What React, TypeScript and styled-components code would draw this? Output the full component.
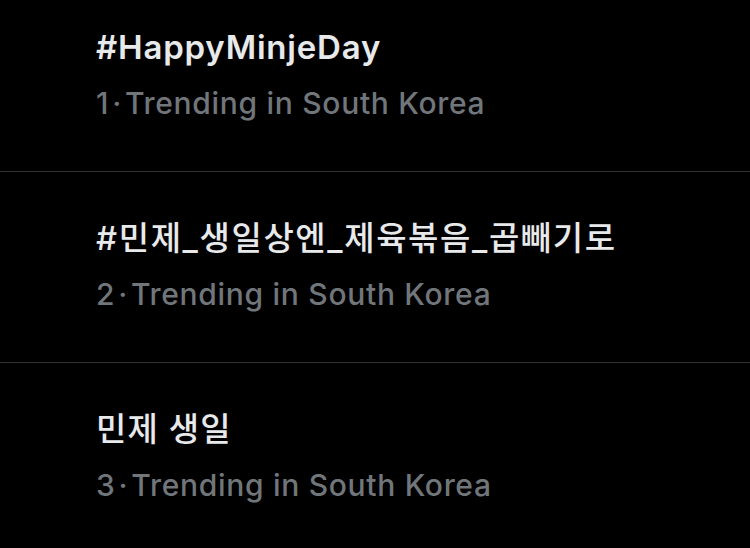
import React from "react";
import styled, { createGlobalStyle } from "styled-components";

const GlobalStyle = createGlobalStyle`
  html, body {
    margin: 0;
    padding: 0;
    background: #000000;
  }
  body {
    font-family: "Inter", "Noto Sans CJK KR", sans-serif;
    -webkit-font-smoothing: antialiased;
  }
`;

const Page = styled.div`
  width: 750px;
  height: 548px;
  background: #000000;
  overflow: hidden;
  display: flex;
  flex-direction: column;
`;

const Row = styled.div<{ $first?: boolean; $last?: boolean }>`
  display: flex;
  flex-direction: column;
  gap: 18px;
  padding: ${(p) => (p.$first ? "27px" : "46px")} 0 50px 96px;
  border-bottom: ${(p) => (p.$last ? "none" : "1px solid #2f3336")};
  flex-shrink: 0;
`;

const Title = styled.div<{ $hangul?: boolean; $track: number }>`
  font-family: "Inter", "Noto Sans CJK KR", sans-serif;
  font-size: 33px;
  line-height: 40px;
  font-weight: ${(p) => (p.$hangul ? 500 : 600)};
  color: #e7e9ea;
  white-space: nowrap;
  letter-spacing: ${(p) => p.$track}px;
`;

const Meta = styled.div`
  font-family: "Inter", "Noto Sans CJK KR", sans-serif;
  font-size: 30px;
  line-height: 36px;
  font-weight: 500;
  color: #71767b;
  white-space: nowrap;
  letter-spacing: 0.7px;
`;

const Dot = styled.span`
  margin: 0 3px 0 3px;
`;

const trends = [
  { rank: 1, title: "#HappyMinjeDay", hangul: false, track: 0.8 },
  { rank: 2, title: "#민제_생일상엔_제육볶음_곱빼기로", hangul: true, track: 1.6 },
  { rank: 3, title: "민제 생일", hangul: true, track: 1.1 },
];

export default function App() {
  return (
    <Page>
      <GlobalStyle />
      {trends.map((t, i) => (
        <Row key={t.rank} $first={i === 0} $last={i === trends.length - 1}>
          <Title $hangul={t.hangul} $track={t.track}>
            {t.title}
          </Title>
          <Meta>
            {t.rank}
            <Dot>·</Dot>Trending in South Korea
          </Meta>
        </Row>
      ))}
    </Page>
  );
}
